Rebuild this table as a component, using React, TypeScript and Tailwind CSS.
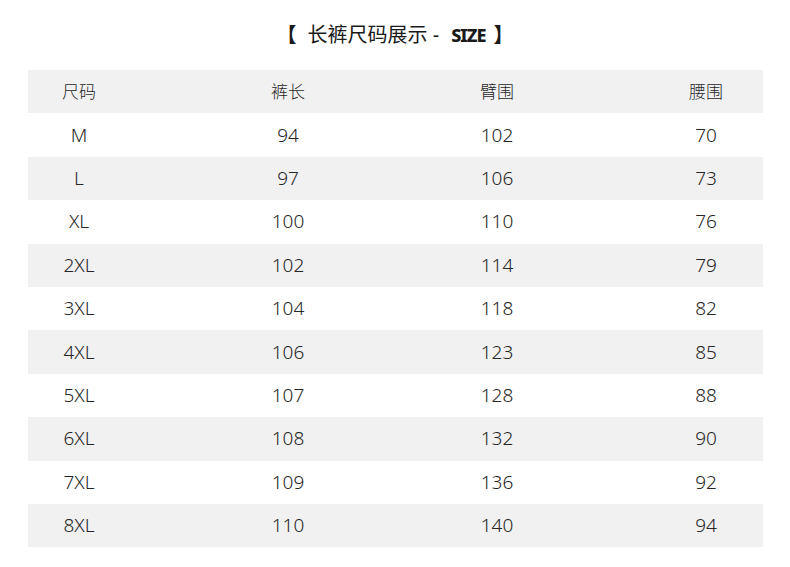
const rows: [string, number, number, number][] = [
  ["M", 94, 102, 70],
  ["L", 97, 106, 73],
  ["XL", 100, 110, 76],
  ["2XL", 102, 114, 79],
  ["3XL", 104, 118, 82],
  ["4XL", 106, 123, 85],
  ["5XL", 107, 128, 88],
  ["6XL", 108, 132, 90],
  ["7XL", 109, 136, 92],
  ["8XL", 110, 140, 94],
];

function Row({ cells, gray, header }: { cells: (string | number)[]; gray: boolean; header?: boolean }) {
  return (
    <div className={`flex items-center gap-[107px] h-[43.4px] ${gray ? "bg-[#f1f1f1]" : "bg-white"}`}>
      {cells.map((c, i) => (
        <div
          key={i}
          className={`w-[102px] text-center leading-none ${header ? "text-[17px]" : "text-[19px]"}`}
        >
          {c}
        </div>
      ))}
    </div>
  );
}

export default function App() {
  return (
    <div
      className="w-[790px] h-[567px] bg-white text-[#262626]"
      style={{ fontFamily: '"Noto Sans", "Noto Sans CJK SC", sans-serif' }}
    >
      <div className="h-[70px] flex items-center justify-center text-[20px] text-[#1a1a1a]">
        <span className="font-bold">【</span>
        <span className="ml-[11px] font-normal">长裤尺码展示 -</span>
        <span className="ml-[12px] text-[18px] font-extrabold tracking-[-1px]">SIZE</span>
        <span className="ml-[8px] font-bold">】</span>
      </div>
      <div className="mx-[28px] w-[735px] font-light">
        <Row cells={["尺码", "裤长", "臂围", "腰围"]} gray header />
        {rows.map((r, i) => (
          <Row key={r[0]} cells={r} gray={i % 2 === 1} />
        ))}
      </div>
    </div>
  );
}
